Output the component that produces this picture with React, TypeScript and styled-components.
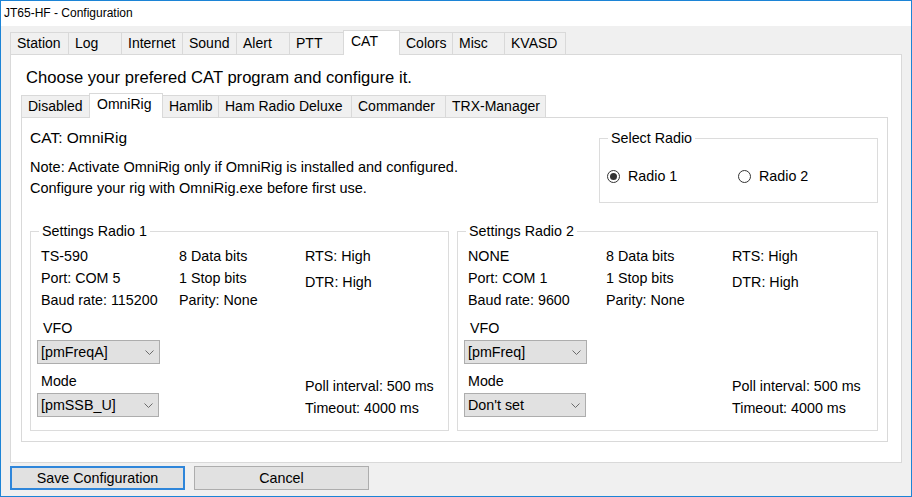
import React from "react";
import styled, { createGlobalStyle } from "styled-components";

const GlobalStyle = createGlobalStyle`
  html, body { margin: 0; padding: 0; background: #ffffff; }
  body { font-family: "Liberation Sans", Arial, sans-serif; color: #000; }
  * { box-sizing: border-box; }
`;

const Window = styled.div`
  width: 912px;
  height: 497px;
  border: 1px solid #1c84d6;
  display: flex;
  flex-direction: column;
  background: #f0f0f0;
  overflow: hidden;
`;

const TitleBar = styled.div`
  flex: none;
  height: 25px;
  background: #ffffff;
  font-size: 12px;
  line-height: 25px;
  padding-left: 3px;
`;

const Body = styled.div`
  flex: 1;
  display: flex;
  flex-direction: column;
  padding: 4px 9px 6px;
`;

const TabStrip = styled.div`
  flex: none;
  display: flex;
  align-items: flex-end;
  height: 24px;
  position: relative;
  z-index: 1;
`;

const Tab = styled.div<{ $w: number; $active?: boolean }>`
  flex: none;
  width: ${(p) => p.$w}px;
  height: ${(p) => (p.$active ? 25 : 22)}px;
  margin-bottom: ${(p) => (p.$active ? -1 : 0)}px;
  margin-left: -1px;
  &:first-child { margin-left: 0; }
  border: 1px solid #d9d9d9;
  border-bottom: none;
  background: ${(p) => (p.$active ? "#ffffff" : "#f0f0f0")};
  font-size: 14px;
  line-height: ${(p) => (p.$active ? 20 : 21)}px;
  padding-left: ${(p) => (p.$active ? 7 : 6)}px;
  white-space: nowrap;
  position: relative;
  z-index: ${(p) => (p.$active ? 2 : 1)};
`;

const Page = styled.div`
  flex: none;
  height: 409px;
  border: 1px solid #d9d9d9;
  background: #ffffff;
  padding: 13px 13px 0 10px;
  display: flex;
  flex-direction: column;
`;

const Heading = styled.div`
  font-size: 16.6px;
  line-height: 19px;
  margin: 0 0 6px 5px;
  white-space: nowrap;
`;

const SubPage = styled.div`
  flex: none;
  height: 325px;
  border: 1px solid #d9d9d9;
  background: #ffffff;
  padding: 11px 9px 0 8px;
  display: flex;
  flex-direction: column;
  font-size: 14.3px;
`;

const TopRow = styled.div`
  display: flex;
  justify-content: space-between;
  height: 74px;
`;

const InfoBlock = styled.div`
  display: flex;
  flex-direction: column;
`;

const CatLabel = styled.div`
  font-size: 15.5px;
  line-height: 18px;
  white-space: nowrap;
`;

const Note = styled.div`
  margin-top: 10px;
  font-size: 14.5px;
  line-height: 21px;
  white-space: nowrap;
`;

const GroupBox = styled.fieldset<{ $w: number; $h: number }>`
  width: ${(p) => p.$w}px;
  height: ${(p) => p.$h}px;
  margin: 0;
  padding: 0;
  border: 1px solid #dcdcdc;
  min-inline-size: 0;
  flex: none;
`;

const Legend = styled.legend`
  margin-left: 8px;
  padding: 0 3px;
  font-size: 14.3px;
  line-height: 18px;
  white-space: nowrap;
`;

const RadioRow = styled.div`
  display: flex;
  padding: 19px 0 0 7px;
`;

const RadioItem = styled.label`
  display: flex;
  align-items: center;
  gap: 8px;
  width: 131px;
  height: 20px;
  white-space: nowrap;
`;

const RadioCircle = styled.span<{ $checked?: boolean }>`
  flex: none;
  width: 13px;
  height: 13px;
  border-radius: 50%;
  border: 1px solid #333333;
  background: #ffffff;
  display: flex;
  align-items: center;
  justify-content: center;
  &::after {
    content: "";
    width: 7px;
    height: 7px;
    border-radius: 50%;
    background: ${(p) => (p.$checked ? "#333333" : "transparent")};
  }
`;

const GroupsRow = styled.div`
  display: flex;
  gap: 8px;
  margin-top: 19px;
`;

const GroupContent = styled.div`
  padding: 5px 0 0 6px;
  display: flex;
  flex-direction: column;
`;

const InfoGrid = styled.div`
  display: grid;
  grid-template-columns: 138px 126px 1fr;
  padding-left: 4px;
`;

const InfoCol = styled.div<{ $gap?: number }>`
  display: flex;
  flex-direction: column;
  gap: ${(p) => p.$gap ?? 0}px;
  line-height: 22px;
  white-space: nowrap;
`;

const Lower = styled.div`
  display: grid;
  grid-template-columns: 268px 1fr;
  align-items: end;
`;

const ControlCol = styled.div`
  display: flex;
  flex-direction: column;
  align-items: flex-start;
`;

const FieldLabel = styled.div<{ $indent: number }>`
  margin-top: 7px;
  padding-left: ${(p) => p.$indent}px;
  line-height: 20px;
`;

const Combo = styled.div<{ $w: number }>`
  margin-top: 2px;
  width: ${(p) => p.$w}px;
  height: 24px;
  border: 1px solid #adadad;
  background: #e1e1e1;
  display: flex;
  align-items: center;
  justify-content: space-between;
  padding: 0 5px 0 3px;
  white-space: nowrap;
`;

const TimingCol = styled.div`
  display: flex;
  flex-direction: column;
  line-height: 22px;
  margin-bottom: -2px;
  white-space: nowrap;
`;

const ButtonRow = styled.div`
  flex: none;
  display: flex;
  gap: 9px;
  margin-top: 3px;
`;

const Button = styled.div<{ $default?: boolean }>`
  width: 175px;
  height: 24px;
  border: ${(p) => (p.$default ? "2px solid #2f86da" : "1px solid #adadad")};
  background: #e1e1e1;
  display: flex;
  align-items: center;
  justify-content: center;
  font-size: 14.3px;
`;

const Chevron = () => (
  <svg width="9" height="5" viewBox="0 0 9 5">
    <polyline points="0.5,0.5 4.5,4.5 8.5,0.5" fill="none" stroke="#6b6b6b" strokeWidth="1" />
  </svg>
);

type RadioSettings = {
  title: string;
  width: number;
  rig: string;
  port: string;
  baud: string;
  vfo: string;
  mode: string;
};

const radios: RadioSettings[] = [
  { title: "Settings Radio 1", width: 419, rig: "TS-590", port: "COM 5", baud: "115200", vfo: "[pmFreqA]", mode: "[pmSSB_U]" },
  { title: "Settings Radio 2", width: 421, rig: "NONE", port: "COM 1", baud: "9600", vfo: "[pmFreq]", mode: "Don't set" },
];

const mainTabs: [string, number][] = [
  ["Station", 59], ["Log", 54], ["Internet", 62], ["Sound", 55], ["Alert", 54],
  ["PTT", 55], ["CAT", 57], ["Colors", 54], ["Misc", 53], ["KVASD", 62],
];

const subTabs: [string, number][] = [
  ["Disabled", 69], ["OmniRig", 74], ["Hamlib", 57], ["Ham Radio Deluxe", 134],
  ["Commander", 95], ["TRX-Manager", 101],
];

export default function App() {
  return (
    <>
      <GlobalStyle />
      <Window>
        <TitleBar>JT65-HF - Configuration</TitleBar>
        <Body>
          <TabStrip>
            {mainTabs.map(([t, w]) => (
              <Tab key={t} $w={w} $active={t === "CAT"}>{t}</Tab>
            ))}
          </TabStrip>
          <Page>
            <Heading>Choose your prefered CAT program and configure it.</Heading>
            <TabStrip>
              {subTabs.map(([t, w]) => (
                <Tab key={t} $w={w} $active={t === "OmniRig"}>{t}</Tab>
              ))}
            </TabStrip>
            <SubPage>
              <TopRow>
                <InfoBlock>
                  <CatLabel>CAT: OmniRig</CatLabel>
                  <Note>
                    Note: Activate OmniRig only if OmniRig is installed and configured.
                    <br />
                    Configure your rig with OmniRig.exe before first use.
                  </Note>
                </InfoBlock>
                <GroupBox $w={279} $h={74}>
                  <Legend>Select Radio</Legend>
                  <RadioRow>
                    <RadioItem><RadioCircle $checked />Radio 1</RadioItem>
                    <RadioItem><RadioCircle />Radio 2</RadioItem>
                  </RadioRow>
                </GroupBox>
              </TopRow>
              <GroupsRow>
                {radios.map((r) => (
                  <GroupBox key={r.title} $w={r.width} $h={209}>
                    <Legend>{r.title}</Legend>
                    <GroupContent>
                      <InfoGrid>
                        <InfoCol>
                          <span>{r.rig}</span>
                          <span>Port: {r.port}</span>
                          <span>Baud rate: {r.baud}</span>
                        </InfoCol>
                        <InfoCol>
                          <span>8 Data bits</span>
                          <span>1 Stop bits</span>
                          <span>Parity: None</span>
                        </InfoCol>
                        <InfoCol $gap={4}>
                          <span>RTS: High</span>
                          <span>DTR: High</span>
                        </InfoCol>
                      </InfoGrid>
                      <Lower>
                        <ControlCol>
                          <FieldLabel $indent={6}>VFO</FieldLabel>
                          <Combo $w={123}>{r.vfo}<Chevron /></Combo>
                          <FieldLabel $indent={4}>Mode</FieldLabel>
                          <Combo $w={122}>{r.mode}<Chevron /></Combo>
                        </ControlCol>
                        <TimingCol>
                          <span>Poll interval: 500 ms</span>
                          <span>Timeout: 4000 ms</span>
                        </TimingCol>
                      </Lower>
                    </GroupContent>
                  </GroupBox>
                ))}
              </GroupsRow>
            </SubPage>
          </Page>
          <ButtonRow>
            <Button $default>Save Configuration</Button>
            <Button>Cancel</Button>
          </ButtonRow>
        </Body>
      </Window>
    </>
  );
}
